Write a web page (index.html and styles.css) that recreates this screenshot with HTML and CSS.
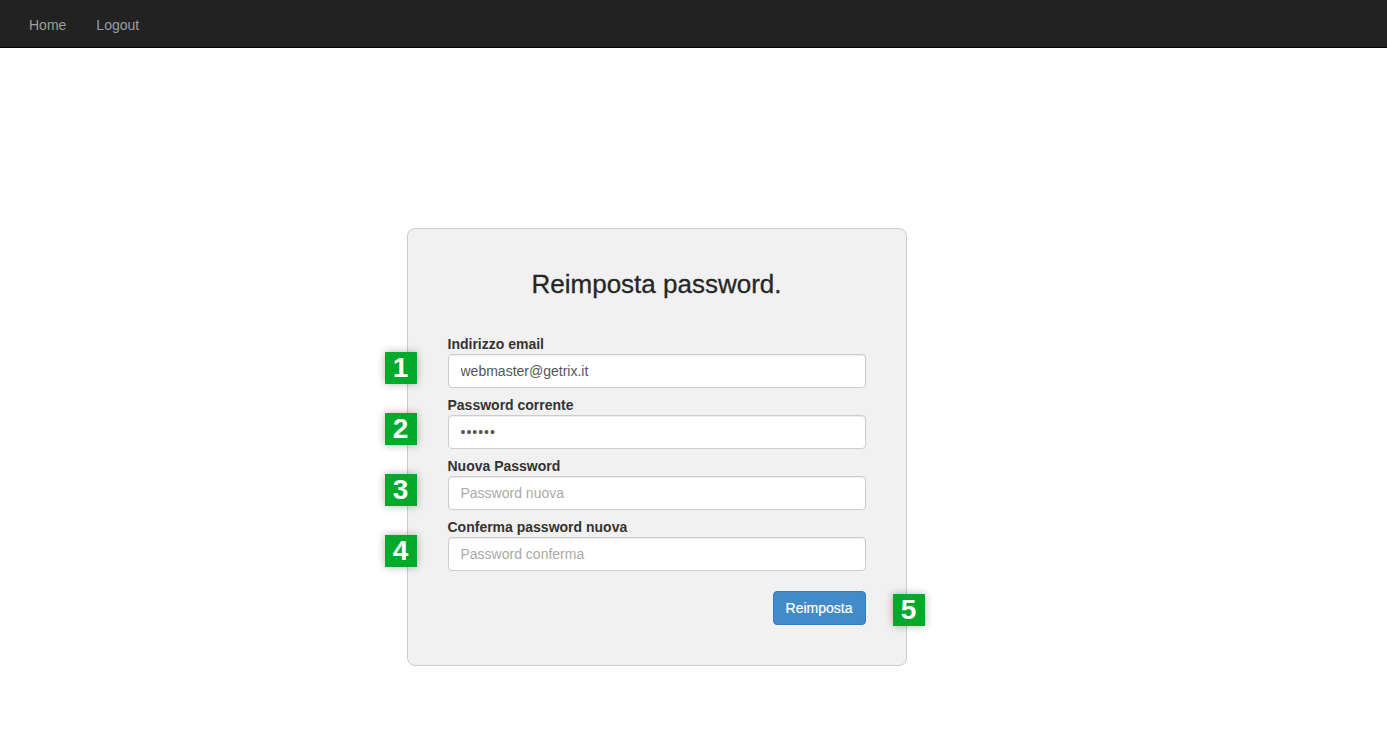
FILE: index.html
```html
<!DOCTYPE html>
<html lang="it">
<head>
  <meta charset="UTF-8" />
  <meta name="viewport" content="width=device-width, initial-scale=1.0"/>
  <title>Reimposta password</title>
  <link rel="stylesheet" href="styles.css">
</head>
<body>
  <nav class="navbar">
    <a href="#">Home</a>
    <a href="#">Logout</a>
  </nav>

  <div class="page">
    <form class="panel" onsubmit="return false">
      <h2>Reimposta password.</h2>

      <div class="group">
        <label for="email">Indirizzo email</label>
        <div class="field">
          <span class="badge">1</span>
          <input type="text" id="email" value="webmaster@getrix.it"/>
        </div>
      </div>

      <div class="group">
        <label for="current">Password corrente</label>
        <div class="field">
          <span class="badge">2</span>
          <input type="password" id="current" value="123456"/>
        </div>
      </div>

      <div class="group">
        <label for="newpwd">Nuova Password</label>
        <div class="field">
          <span class="badge">3</span>
          <input type="password" id="newpwd" placeholder="Password nuova"/>
        </div>
      </div>

      <div class="group">
        <label for="confirm">Conferma password nuova</label>
        <div class="field">
          <span class="badge">4</span>
          <input type="password" id="confirm" placeholder="Password conferma"/>
        </div>
      </div>

      <div class="actions">
        <button type="submit">Reimposta</button>
        <span class="badge badge-btn">5</span>
      </div>
    </form>
  </div>
</body>
</html>
```

FILE: styles.css
```css
body {
  margin: 0;
  background: #fff;
  color: #333;
  font-family: "Liberation Sans", Arial, sans-serif;
  font-size: 14px;
  line-height: 1.42857;
}
.navbar {
  background: #222;
  height: 48px;
  border-bottom: 1px solid #080808;
  box-sizing: border-box;
  display: flex;
  align-items: center;
  padding-left: 29px;
  gap: 30px;
}
.navbar a {
  color: #9d9d9d;
  text-decoration: none;
  font-size: 14px;
  margin-top: 5px;
}
.page {
  display: flex;
  justify-content: center;
  padding-top: 180px;
  padding-right: 74px;
}
.panel {
  width: 418px;
  background: #f1f1f1;
  border: 1px solid #ccc;
  border-radius: 8px;
  padding: 41px 40px 40px;
}
.panel h2 {
  margin: 0 0 36px;
  text-align: center;
  font-size: 26px;
  font-weight: normal;
  line-height: 1.1;
  color: #262626;
  -webkit-text-stroke: 0.3px #262626;
}
.group {
  margin-bottom: 8px;
}
.group label {
  display: block;
  font-weight: bold;
  margin-bottom: -1px;
}
.field {
  position: relative;
}
.field input {
  display: block;
  width: 100%;
  height: 34px;
  box-sizing: border-box;
  padding: 6px 12px;
  font-family: inherit;
  font-size: 14px;
  color: #555;
  background: #fff;
  border: 1px solid #ccc;
  border-radius: 4px;
  box-shadow: inset 0 1px 1px rgba(0,0,0,.075);
}
.field input::placeholder {
  color: #aaa;
}
.field input[type=password]:not(:placeholder-shown) {
  letter-spacing: 1px;
}
.badge {
  position: absolute;
  width: 32px;
  height: 32px;
  background: #03a92a;
  color: #fff;
  font-weight: bold;
  font-size: 28px;
  line-height: 32px;
  text-align: center;
  box-shadow: 0 0 8px rgba(0,0,0,.3);
}
.field .badge {
  left: -63px;
  top: -2px;
}
.actions {
  position: relative;
  display: flex;
  justify-content: flex-end;
  margin-top: 20px;
}
.actions button {
  height: 34px;
  padding: 6px 12px;
  font-family: inherit;
  font-size: 14px;
  color: #fff;
  background: #428bca;
  border: 1px solid #357ebd;
  border-radius: 4px;
  cursor: pointer;
  -webkit-text-stroke: 0.2px #fff;
}
.badge-btn {
  right: -59px;
  top: 3px;
}
```
